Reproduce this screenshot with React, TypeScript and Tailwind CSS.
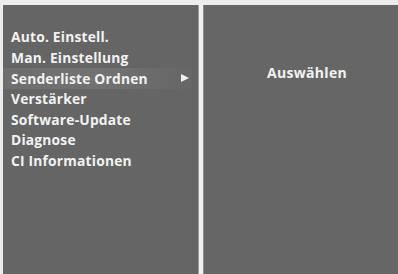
export default function App() {
  const items = [
    "Auto. Einstell.",
    "Man. Einstellung",
    "Senderliste Ordnen",
    "Verstärker",
    "Software-Update",
    "Diagnose",
    "CI Informationen",
  ];

  return (
    <div
      className="w-[398px] h-[274px] bg-[#ececec] pt-[5px] pl-[3px] flex overflow-hidden"
      style={{ fontFamily: '"Open Sans", "Noto Sans", sans-serif' }}
    >
      {/* Left menu */}
      <div className="w-[195px] h-full bg-[#656565] pt-[22px] pl-[8px] pr-[6px]">
        {items.map((label, i) => (
          <div
            key={label}
            className={`h-[20.6px] flex items-center justify-between text-[13.8px] font-bold text-[#f2f2f2] leading-none ${
              i === 2 ? "bg-gradient-to-r from-[#6e6e6e] via-[#727272] to-[#666666] -ml-[8px] pl-[8px]" : ""
            }`}
          >
            <span className="tracking-[0.2px]">{label}</span>
            {i === 2 && (
              <svg width="8" height="8" viewBox="0 0 8 8" className="mr-[3px]">
                <polygon points="0,0 8,4 0,8" fill="#f0f0f0" />
              </svg>
            )}
          </div>
        ))}
      </div>

      {/* Divider */}
      <div className="w-[6px] h-full flex">
        <div className="w-[1px] bg-[#9a9a9a]" />
        <div className="w-[4px] bg-[#f0f0f0]" />
        <div className="w-[1px] bg-[#8a8a8a]" />
      </div>

      {/* Right panel */}
      <div className="flex-1 h-full bg-[#666666] flex justify-center pt-[61px] pl-[12px]">
        <span className="text-[14px] font-bold text-[#f2f2f2] leading-none h-fit tracking-[0.3px]">Auswählen</span>
      </div>
    </div>
  );
}
